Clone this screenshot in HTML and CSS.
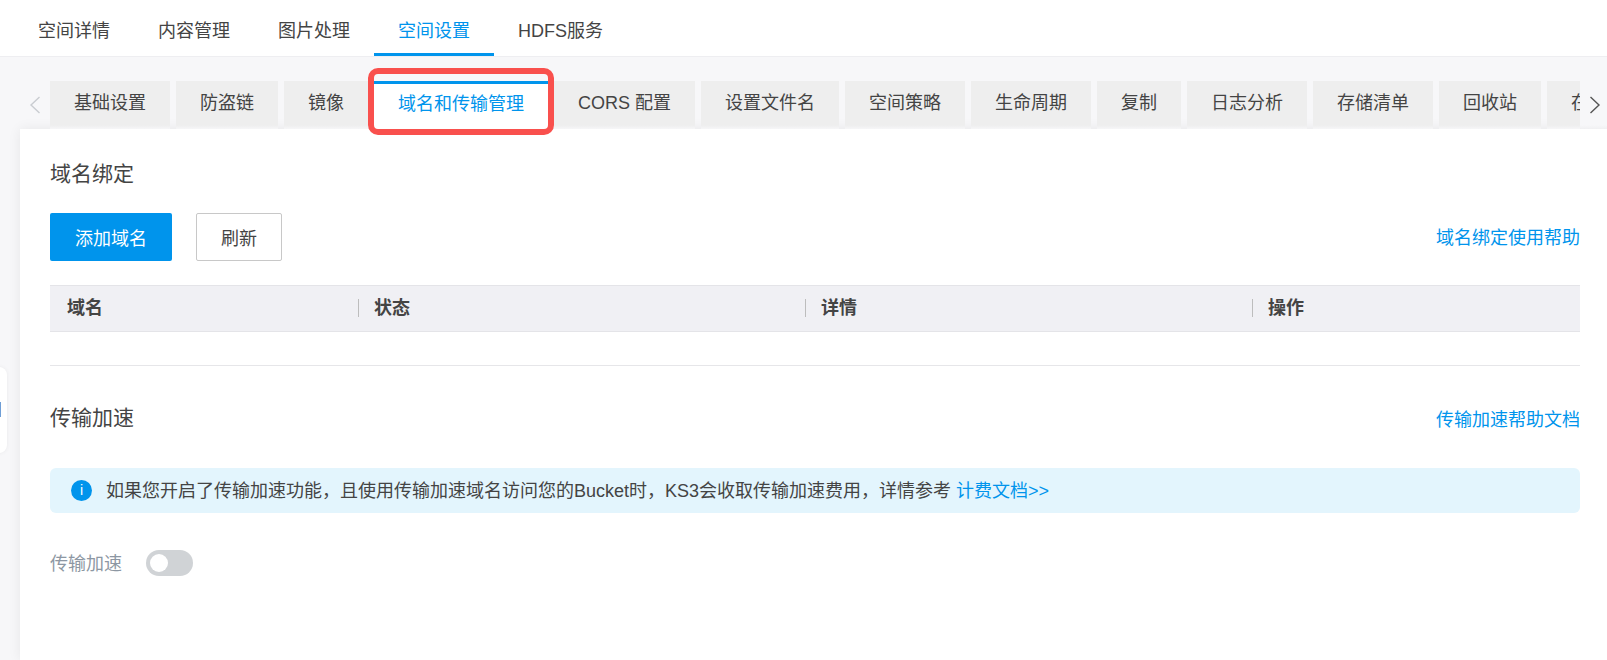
FILE: index.html
```html
<!DOCTYPE html>
<html lang="zh-CN">
<head>
<meta charset="utf-8">
<title>空间设置</title>
<link rel="stylesheet" href="styles.css">
</head>
<body>
<nav class="topnav">
  <a class="topnav-item">空间详情</a>
  <a class="topnav-item">内容管理</a>
  <a class="topnav-item">图片处理</a>
  <a class="topnav-item is-active">空间设置</a>
  <a class="topnav-item">HDFS服务</a>
</nav>
<main class="page">
  <div class="side-handle"><span class="side-handle-bar"></span></div>
  <div class="tabbar">
    <button class="tab-arrow tab-arrow-left" aria-label="上一个">
      <svg width="12" height="18" viewBox="0 0 12 18"><path d="M10.5 1 2 9l8.500 8" fill="none" stroke="#c9ccd1" stroke-width="1.400"/></svg>
    </button>
    <div class="tabs">
      <a class="tab">基础设置</a>
      <a class="tab">防盗链</a>
      <a class="tab">镜像</a>
      <a class="tab is-active">域名和传输管理<span class="annotation"></span></a>
      <a class="tab">CORS 配置</a>
      <a class="tab">设置文件名</a>
      <a class="tab">空间策略</a>
      <a class="tab">生命周期</a>
      <a class="tab">复制</a>
      <a class="tab">日志分析</a>
      <a class="tab">存储清单</a>
      <a class="tab">回收站</a>
      <a class="tab">在线解压</a>
    </div>
    <button class="tab-arrow tab-arrow-right" aria-label="下一个">
      <svg width="12" height="18" viewBox="0 0 12 18"><path d="M1.500 1 10 9l-8.500 8" fill="none" stroke="#555" stroke-width="1.400"/></svg>
    </button>
  </div>
  <section class="panel">
    <h2 class="section-title title-bind">域名绑定</h2>
    <div class="toolbar">
      <button class="btn btn-primary">添加域名</button>
      <button class="btn btn-default">刷新</button>
      <a class="link toolbar-link">域名绑定使用帮助</a>
    </div>
    <div class="table-head">
      <div class="th">域名</div>
      <div class="th">状态</div>
      <div class="th">详情</div>
      <div class="th">操作</div>
    </div>
    <hr class="divider">
    <div class="section-row">
      <h2 class="section-title section-title-lift">传输加速</h2>
      <a class="link">传输加速帮助文档</a>
    </div>
    <div class="notice">
      <span class="notice-icon">i</span>
      <span>如果您开启了传输加速功能，且使用传输加速域名访问您的Bucket时，KS3会收取传输加速费用，详情参考 <a class="link">计费文档&gt;&gt;</a></span>
    </div>
    <div class="switch-row">
      <span class="switch-label">传输加速</span>
      <span class="switch"><span class="switch-knob"></span></span>
    </div>
  </section>
</main>
</body>
</html>
```

FILE: styles.css
```css
* { box-sizing: border-box; }
html, body { margin: 0; height: 660px; overflow: hidden; }
body {
  background: #f7f7f9;
  font-family: "Liberation Sans", "Noto Sans CJK SC", sans-serif;
  font-size: 18px;
  color: #444;
}
.topnav {
  display: flex;
  height: 57px;
  padding-left: 14px;
  background: #fff;
  border-bottom: 1px solid #eeeef1;
}
.topnav-item {
  height: 56px;
  padding: 0 24px;
  line-height: 62px;
  border-bottom: 3px solid transparent;
}
.topnav-item.is-active { color: #0094ec; border-bottom-color: #0094ec; }

.page { position: relative; height: 603px; }
.side-handle {
  position: absolute;
  left: -10px;
  top: 310px;
  width: 17px;
  height: 86px;
  background: #fff;
  border-radius: 8px;
  box-shadow: 0 0 4px rgba(0, 0, 0, .06);
}
.side-handle-bar {
  position: absolute;
  left: 9px;
  top: 35px;
  width: 2px;
  height: 15px;
  background: #6f9ed6;
}
.tabbar {
  position: relative;
  z-index: 1;
  display: flex;
  align-items: flex-end;
  height: 72px;
  padding-left: 26px;
}
.tab-arrow {
  position: relative;
  z-index: 2;
  width: 24px;
  height: 48px;
  padding: 0;
  border: 0;
  background: transparent;
  display: flex;
  align-items: center;
}
.tab-arrow-left { justify-content: flex-start; padding-left: 3px; }
.tab-arrow-right { width: 27px; padding-left: 9px; background: linear-gradient(#f7f7f9 92%, #f0f0f2); }
.tabs {
  display: flex;
  gap: 6px;
  width: 1530px;
  height: 48px;
  clip-path: inset(-20px 0 -10px 0);
}
.tab {
  position: relative;
  flex: none;
  height: 48px;
  padding: 0 24px;
  line-height: 45px;
  background: linear-gradient(#eeeeee 92%, #f6f6f8);
  white-space: nowrap;
}
.tab.is-active {
  z-index: 2;
  background: #fff;
  color: #0094ec;
  border-top: 3px solid #0094ec;
  line-height: 40px;
}
.annotation {
  position: absolute;
  left: -6px;
  right: -6px;
  top: -16px;
  bottom: -6px;
  border: 6px solid #f9504d;
  border-radius: 10px;
  pointer-events: none;
}
.panel {
  position: relative;
  margin-left: 20px;
  height: 531px;
  padding: 0 27px 0 30px;
  background: #fff;
  box-shadow: 0 0 12px rgba(0, 0, 0, .07);
}
.section-title { margin: 0; font-size: 21px; font-weight: 400; color: #444; }
.section-title-lift { margin-bottom: 3px; }
.title-bind { padding-top: 30px; line-height: 29px; }
.toolbar {
  display: flex;
  align-items: center;
  margin-top: 25px;
}
.btn {
  height: 48px;
  padding: 0 24px;
  border-radius: 2px;
  font: inherit;
}
.btn-primary { width: 122px; border: 0; background: #0094ec; color: #fff; }
.btn-default { width: 86px; margin-left: 24px; border: 1px solid #c8c8c8; background: #fff; color: #444; }
.link { color: #0094ec; }
.toolbar-link { margin-left: auto; margin-bottom: 2px; }
.table-head {
  display: grid;
  grid-template-columns: 308px 447px 447px 328px;
  height: 47px;
  margin-top: 24px;
  padding-bottom: 2px;
  background: #f0f0f4;
  border-top: 1px solid #e4e4e8;
  border-bottom: 1px solid #e4e4e8;
  align-items: center;
  font-weight: 700;
}
.th { height: 18px; line-height: 18px; padding-left: 15px; border-left: 1px solid #bdbdbd; }
.th:first-child { padding-left: 17px; border-left: 0; }
.divider { margin: 33px 0 0; border: 0; border-top: 1px solid #e6e6e9; }
.section-row {
  display: flex;
  justify-content: space-between;
  align-items: center;
  margin-top: 37px;
  height: 29px;
}
.notice {
  display: flex;
  align-items: center;
  height: 45px;
  margin-top: 36px;
  padding: 0 0 3px 21px;
  gap: 14px;
  background: #e3f5fd;
  border-radius: 6px;
}
.notice-icon {
  width: 21px;
  height: 21px;
  margin-top: 3px;
  border-radius: 50%;
  background: #0094ec;
  color: #fff;
  font-size: 14px;
  line-height: 21px;
  text-align: center;
}
.switch-row {
  display: flex;
  align-items: center;
  margin-top: 37px;
  height: 26px;
  gap: 24px;
}
.switch-label { color: #8d97a3; margin-bottom: 3px; }
.switch {
  width: 47px;
  height: 26px;
  padding: 4px;
  border-radius: 13px;
  background: #d0d3d6;
}
.switch-knob { display: block; width: 18px; height: 18px; border-radius: 50%; background: #fff; }
```
